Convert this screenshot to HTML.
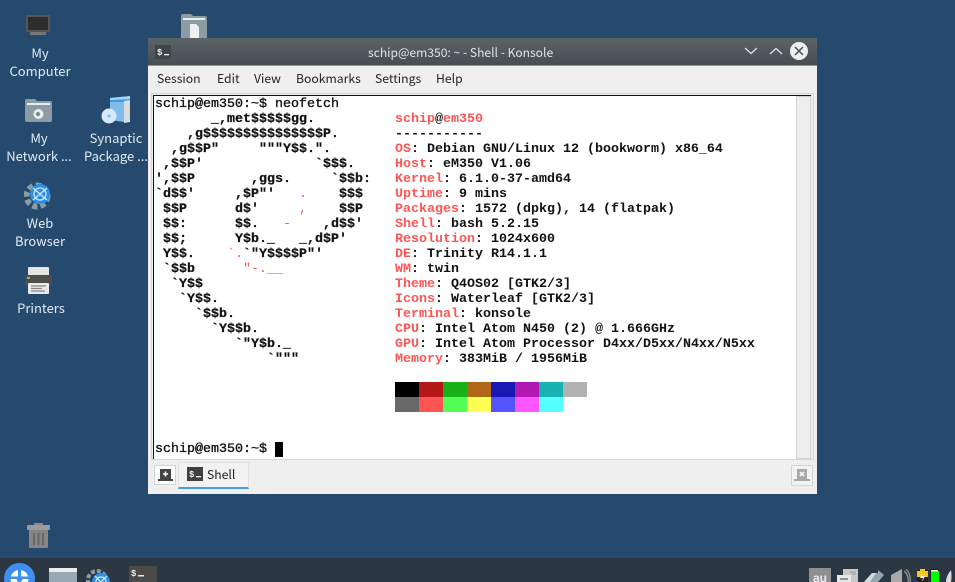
<!DOCTYPE html>
<html><head><meta charset="utf-8">
<style>
html,body{margin:0;padding:0;width:955px;height:582px;overflow:hidden;background:#254a6e}
body{position:relative;font-family:"Noto Sans CJK SC","Liberation Sans",sans-serif}
.a{position:absolute}
.lbl{position:absolute;color:#dfeaf4;font-size:13px;line-height:18px;text-align:center;white-space:nowrap}
.menu{position:absolute;top:70px;font-size:12.200px;line-height:16px;color:#222}
pre{position:absolute;margin:0;font:bold 13.333px/15px "Liberation Mono",monospace;color:#111;white-space:pre}
i{font-style:normal;color:#ff5454}
.art i{font-weight:normal;-webkit-text-stroke:0}
svg{position:absolute;overflow:hidden}
</style></head><body>

<!-- desktop icons -->
<svg style="left:26px;top:15px" width="24" height="22" viewBox="0 0 24 22"><rect width="24" height="17" fill="#555"/><rect x="2" y="2" width="20" height="13" fill="#2d2d2d"/><rect x="4" y="17" width="16" height="3" fill="#777"/></svg>
<div class="lbl" style="left:0;top:44px;width:80px">My<br>Computer</div>

<svg style="left:25px;top:99px" width="27" height="24" viewBox="0 0 27 24"><path d="M0 2q0-2 2-2h8l2 2h13q2 0 2 2v17q0 2-2 2H2q-2 0-2-2z" fill="#8b9ca4"/><rect x="2" y="4" width="23" height="2" fill="#e8eced"/><circle cx="13.500" cy="15" r="5" fill="#e8eced"/><circle cx="13" cy="15" r="2" fill="#77888f"/></svg>
<div class="lbl" style="left:0;top:129px;width:78px">My<br>Network ...</div>

<svg style="left:101px;top:96px" width="30" height="30" viewBox="0 0 30 30"><path d="M9 2l20-2v26l-20-2z" fill="#3d9be9"/><path d="M9 2l20-2v3l-20 1z" fill="#a8d6f8"/><path d="M9 6l14 0v20l-14-2z" fill="#7fbcec"/><path d="M23 5l6-1v22l-6 1z" fill="#d6dee2"/><circle cx="8" cy="20" r="7.500" fill="#d5e9fa"/><circle cx="8" cy="20" r="1.500" fill="#7fbcec"/></svg>
<div class="lbl" style="left:77px;top:129px;width:78px">Synaptic<br>Package ...</div>

<svg style="left:24px;top:181px" width="29" height="29" viewBox="0 0 29 29"><circle cx="13" cy="15" r="10.500" fill="none" stroke="#8b9ca4" stroke-width="6" stroke-dasharray="5 3"/><circle cx="16" cy="13" r="10" fill="#2b8fe8"/><circle cx="16" cy="13" r="6" fill="none" stroke="#cfe6fa" stroke-width="1.300"/><path d="M9 7l14 12M23 7L9 19" stroke="#cfe6fa" stroke-width="1.300" fill="none"/></svg>
<div class="lbl" style="left:0;top:214px;width:80px">Web<br>Browser</div>

<svg style="left:25px;top:267px" width="27" height="27" viewBox="0 0 27 27"><rect x="3" y="0" width="21" height="9" rx="1" fill="#e4e4e4"/><rect x="0" y="8" width="27" height="11" rx="1" fill="#4d4d4d"/><rect x="2" y="10" width="3" height="2" fill="#7ec820"/><rect x="3" y="16" width="21" height="11" rx="1" fill="#e8eaec"/><path d="M6 19h15M6 21.500h11M6 24h14" stroke="#888" stroke-width="1.200"/></svg>
<div class="lbl" style="left:2px;top:299px;width:78px">Printers</div>

<svg style="left:181px;top:14px" width="26" height="24" viewBox="0 0 26 24"><path d="M0 2q0-2 2-2h8l2 2h12q2 0 2 2v20H0z" fill="#8b9ca4"/><rect x="2" y="4" width="22" height="2" fill="#e8eced"/><path d="M9 10h6l3 3v11H9z" fill="#eef1f2"/></svg>

<svg style="left:27px;top:523px" width="23" height="26" viewBox="0 0 23 26"><rect x="7" y="0" width="9" height="3" rx="1" fill="#8a8a8a"/><rect x="0" y="2" width="23" height="5" rx="1" fill="#9a9a9a"/><path d="M2 7h19v17q0 1-1 1H3q-1 0-1-1z" fill="#868686"/><path d="M7 10v12M11.500 10v12M16 10v12" stroke="#666" stroke-width="2"/></svg>

<!-- taskbar -->
<div class="a" style="left:0;top:558px;width:955px;height:24px;background:#2b3843"></div>
<svg style="left:4px;top:563px" width="31" height="19" viewBox="0 0 31 19"><circle cx="15.500" cy="15.500" r="15.500" fill="#3f8ff0"/><circle cx="15.500" cy="16" r="9" fill="#fff"/><rect x="14" y="6" width="3" height="13" fill="#3f8ff0"/><rect x="5" y="13.500" width="21" height="2.500" fill="#3f8ff0"/><circle cx="15.500" cy="16" r="3" fill="#3f8ff0"/></svg>
<svg style="left:49px;top:568px" width="28" height="14" viewBox="0 0 28 14"><rect width="28" height="14" fill="#97a9b1"/><rect width="28" height="4" fill="#e9edee"/></svg>
<svg style="left:86px;top:567px" width="26" height="15" viewBox="0 0 26 15"><circle cx="11" cy="13" r="9" fill="none" stroke="#8b9ca4" stroke-width="4" stroke-dasharray="4 2"/><circle cx="15" cy="15" r="9" fill="#2b8fe8"/><path d="M9 9l12 12M21 9L9 21" stroke="#cfe6fa" stroke-width="1.300"/><circle cx="15" cy="15" r="5" fill="none" stroke="#cfe6fa" stroke-width="1.300"/></svg>
<svg style="left:129px;top:566px" width="28" height="16" viewBox="0 0 28 16"><rect width="28" height="16" rx="1" fill="#4a4a4a"/><text x="2" y="10" font-family="Liberation Mono" font-size="9" font-weight="bold" fill="#e8e8e8">$</text><rect x="9" y="9" width="6" height="1.500" fill="#e8e8e8"/></svg>

<div class="a" style="left:809px;top:568px;width:22px;height:14px;background:#8f9094;color:#eee;font:bold 12px/20px 'Liberation Sans',sans-serif;text-align:center;overflow:hidden">au</div>
<svg style="left:837px;top:569px" width="21" height="13" viewBox="0 0 21 13"><rect x="6" width="15" height="13" fill="#c9c9c9"/><rect y="6" width="14" height="7" fill="#e8e8e8"/><path d="M3 10h8" stroke="#666" stroke-width="1.300"/><path d="M13 3h6M15 5h4" stroke="#999"/></svg>
<svg style="left:864px;top:570px" width="20" height="12" viewBox="0 0 20 12"><path d="M0 12L8 3h6V0l6 5-6 7z" fill="#95a8b0"/><path d="M0 12L8 3h4l-6 9z" fill="#d5dadc"/></svg>
<svg style="left:891px;top:569px" width="20" height="13" viewBox="0 0 20 13"><path d="M0 6l11-6v13H0z" fill="#a9a9a9"/><path d="M13 2q5 4 4 11M15 0q5 5 4 13" stroke="#888" stroke-width="1.500" fill="none"/></svg>
<svg style="left:917px;top:569px" width="23" height="13" viewBox="0 0 23 13"><rect x="0" y="1" width="11" height="12" fill="#222"/><rect x="0" y="2" width="11" height="6" fill="#f3c51f"/><rect x="3" y="0" width="5" height="2" fill="#f3c51f"/><path d="M6 4l-3 5h3l-1 4 3-6H5z" fill="#fff"/><rect x="13" y="0" width="9" height="13" fill="#222"/><rect x="14" y="2" width="8" height="11" fill="#0f0"/><rect x="14" y="1" width="7" height="1.500" fill="#eee"/></svg>
<svg style="left:946px;top:570px" width="9" height="12" viewBox="0 0 9 12"><path d="M0 12q0-6 5-12 1 6 0 12z" fill="#ddd"/></svg>

<!-- window -->
<div class="a" style="left:148px;top:38px;width:669px;height:456px;background:#efefef"></div>
<div class="a" style="left:148px;top:38px;width:669px;box-sizing:border-box;height:28px;background:linear-gradient(#5b6367,#454e53);border-bottom:1px solid #5aa6d8"></div>
<svg style="left:155px;top:45px" width="16" height="14" viewBox="0 0 16 14"><rect width="16" height="14" fill="#404549"/><text x="2" y="10" font-family="Liberation Mono" font-size="9" font-weight="bold" fill="#eee">$</text><rect x="9" y="9" width="5" height="1.300" fill="#eee"/></svg>
<div class="a" style="left:368px;top:45px;color:#dfe3e5;font-size:12.100px;line-height:16px;white-space:nowrap">schip@em350: ~ - Shell - Konsole</div>
<svg style="left:744px;top:46px" width="14" height="10" viewBox="0 0 14 10"><path d="M1 2l6 5.500L13 2" fill="none" stroke="#dfe3e5" stroke-width="1.200"/></svg>
<svg style="left:769px;top:46px" width="14" height="10" viewBox="0 0 14 10"><path d="M1 8l6-5.500L13 8" fill="none" stroke="#dfe3e5" stroke-width="1.200"/></svg>
<svg style="left:790px;top:42px" width="18" height="18" viewBox="0 0 18 18"><circle cx="9" cy="9" r="9" fill="#eceeef"/><path d="M5 5l8 8M13 5l-8 8" stroke="#4a5257" stroke-width="1.500"/></svg>

<div class="menu" style="left:157px">Session</div>
<div class="menu" style="left:217px">Edit</div>
<div class="menu" style="left:254px">View</div>
<div class="menu" style="left:296px">Bookmarks</div>
<div class="menu" style="left:375px">Settings</div>
<div class="menu" style="left:436px">Help</div>

<!-- terminal -->
<div class="a" style="left:151px;top:93px;width:663px;height:367px;border:1px solid #d6d6d6;box-sizing:border-box;background:#efefef"></div>
<div class="a" style="left:153px;top:95px;width:643px;height:364px;background:#fff;border-left:1px solid #111;box-sizing:border-box"></div>
<div class="a" style="left:796px;top:96px;width:15px;height:363px;background:#eee;border:1px solid #d2d2d2;box-sizing:border-box"></div>
<div class="a" style="left:153px;top:95px;width:658px;height:1px;background:#111"></div>

<pre style="left:155px;top:97px;font-weight:normal;-webkit-text-stroke:.35px #111">schip@em350:~$ neofetch</pre>
<pre class="art" style="left:155px;top:112px;-webkit-text-stroke:.25px #111">       _,met$$$$$gg.
    ,g$$$$$$$$$$$$$$$P.
  ,g$$P"     """Y$$.".
 ,$$P'              `$$$.
',$$P       ,ggs.     `$$b:
`d$$'     ,$P"'   <i>.</i>    $$$
 $$P      d$'     <i>,</i>    $$P
 $$:      $$.   <i>-</i>    ,d$$'
 $$;      Y$b._   _,d$P'
 Y$$.    <i>`.</i>`"Y$$$$P"'
 `$$b      <i>"-.__</i>
  `Y$$
   `Y$$.
     `$$b.
       `Y$$b.
          `"Y$b._
              `"""</pre>

<pre style="left:395px;top:112px"><i>schip</i>@<i>em350</i>
-----------
<i>OS</i>: Debian GNU/Linux 12 (bookworm) x86_64
<i>Host</i>: eM350 V1.06
<i>Kernel</i>: 6.1.0-37-amd64
<i>Uptime</i>: 9 mins
<i>Packages</i>: 1572 (dpkg), 14 (flatpak)
<i>Shell</i>: bash 5.2.15
<i>Resolution</i>: 1024x600
<i>DE</i>: Trinity R14.1.1
<i>WM</i>: twin
<i>Theme</i>: Q4OS02 [GTK2/3]
<i>Icons</i>: Waterleaf [GTK2/3]
<i>Terminal</i>: konsole
<i>CPU</i>: Intel Atom N450 (2) @ 1.666GHz
<i>GPU</i>: Intel Atom Processor D4xx/D5xx/N4xx/N5xx
<i>Memory</i>: 383MiB / 1956MiB</pre>

<svg style="left:395px;top:382px" width="192" height="30" viewBox="0 0 192 30" shape-rendering="crispEdges">
<rect x="0" width="24" height="15" fill="#000"/><rect x="24" width="24" height="15" fill="#b21818"/><rect x="48" width="24" height="15" fill="#18b218"/><rect x="72" width="24" height="15" fill="#b26818"/><rect x="96" width="24" height="15" fill="#1818b2"/><rect x="120" width="24" height="15" fill="#b218b2"/><rect x="144" width="24" height="15" fill="#18b2b2"/><rect x="168" width="24" height="15" fill="#b2b2b2"/>
<rect x="0" y="15" width="24" height="15" fill="#686868"/><rect x="24" y="15" width="24" height="15" fill="#ff5454"/><rect x="48" y="15" width="24" height="15" fill="#54ff54"/><rect x="72" y="15" width="24" height="15" fill="#ffff54"/><rect x="96" y="15" width="24" height="15" fill="#5454ff"/><rect x="120" y="15" width="24" height="15" fill="#ff54ff"/><rect x="144" y="15" width="24" height="15" fill="#54ffff"/>
</svg>

<pre style="left:155px;top:442px;font-weight:normal;-webkit-text-stroke:.35px #111">schip@em350:~$</pre>
<div class="a" style="left:275px;top:442px;width:8px;height:15px;background:#000"></div>

<!-- tab bar -->
<div class="a" style="left:154px;top:465px;width:22px;height:20px;background:#fff;border:1px solid #d4d4d4;box-sizing:border-box"></div>
<svg style="left:158px;top:468px" width="15" height="13" viewBox="0 0 15 13"><path d="M2 1h11v10h2v2H0v-2h2z" fill="#444"/><path d="M7.500 3.500v5M5 6h5" stroke="#fff" stroke-width="1.500"/></svg>
<div class="a" style="left:178px;top:462px;width:71px;height:27px;background:#f2f2f2;border:1px solid #e0e0e0;border-bottom:2px solid #4a9fd8;box-sizing:border-box"></div>
<svg style="left:187px;top:467px" width="16" height="14" viewBox="0 0 16 14"><rect width="16" height="14" fill="#404040"/><text x="2" y="10" font-family="Liberation Mono" font-size="9" font-weight="bold" fill="#eee">$</text><rect x="9" y="9" width="5" height="1.300" fill="#eee"/></svg>
<div class="a" style="left:207px;top:466px;font-size:12.200px;line-height:16px;color:#222">Shell</div>
<div class="a" style="left:791px;top:465px;width:22px;height:21px;background:#f2f2f2;border:1px solid #d4d4d4;box-sizing:border-box"></div>
<svg style="left:794px;top:468px" width="16" height="14" viewBox="0 0 16 14"><path d="M3 1h10v10h3v2H0v-2h3z" fill="#a8a8a8"/><path d="M6 4l4 4M10 4L6 8" stroke="#f2f2f2" stroke-width="1.800"/></svg>

</body></html>
